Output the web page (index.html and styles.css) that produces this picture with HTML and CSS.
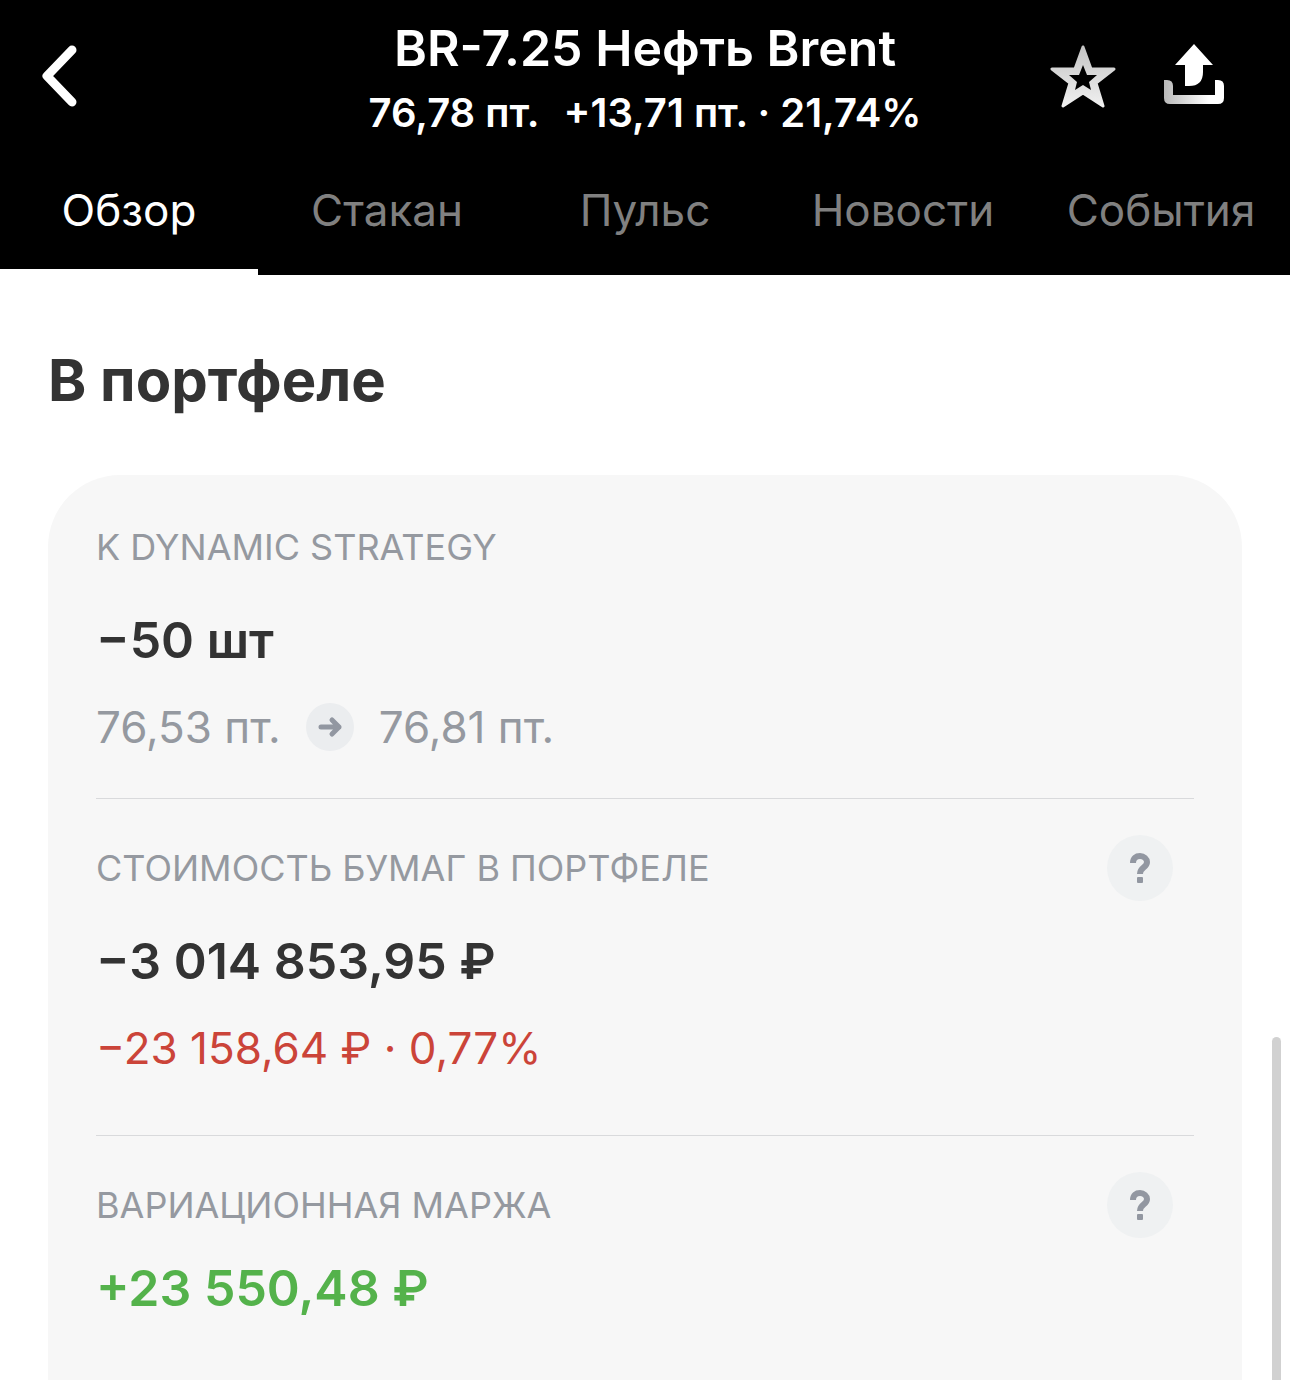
FILE: index.html
```html
<!DOCTYPE html>
<html lang="ru">
<head>
  <meta charset="UTF-8" />
  <meta name="viewport" content="width=device-width, initial-scale=1.0"/>
  <title>BR-7.25 Нефть Brent</title>
  <link rel="stylesheet" href="styles.css">
</head>
<body>

  <header class="header">
    <div class="topbar">
      <button class="icon-btn back" aria-label="Назад">
        <svg width="36" height="62" viewBox="0 0 36 62"><path d="M30 5L5 31l25 26" fill="none" stroke="#fff" stroke-width="9" stroke-linecap="round" stroke-linejoin="round"/></svg>
      </button>
      <div class="instrument">
        <h1>BR-7.25 Нефть Brent</h1>
        <p><span>76,78 пт.</span><span>+13,71 пт. · 21,74%</span></p>
      </div>
      <div class="actions">
        <button class="icon-btn" aria-label="В избранное">
          <svg width="66" height="64" viewBox="0 0 66 64">
            <defs>
              <linearGradient id="starFill" x1="0" y1="0" x2="0" y2="1">
                <stop offset="0" stop-color="#c4c4c4"/>
                <stop offset="1" stop-color="#f0f0f0"/>
              </linearGradient>
            </defs>
            <path d="M33 3L41 25H64L46 39L53 62L33 49L13 62L20 39L2 25H25Z" fill="url(#starFill)" stroke="url(#starFill)" stroke-width="3" stroke-linejoin="round"/>
            <path d="M33 21L37 31H47L39 38L41 46L33 41L25 46L27 38L19 31H29Z" fill="#000"/>
          </svg>
        </button>
        <button class="icon-btn" aria-label="Поделиться">
          <svg width="60" height="60" viewBox="0 0 60 60">
            <defs>
              <linearGradient id="trayFill" x1="0" y1="0" x2="1" y2="0">
                <stop offset="0" stop-color="#b8b8b8"/>
                <stop offset="0.75" stop-color="#fff"/>
              </linearGradient>
            </defs>
            <path d="M30 0L49 21H39V28Q39 42 25 42H21V21H11Z" fill="#fff"/>
            <path d="M0 36H3Q9 36 9 42V51H51V36H54Q60 36 60 42V54Q60 60 54 60H6Q0 60 0 54Z" fill="url(#trayFill)"/>
          </svg>
        </button>
      </div>
    </div>

    <nav class="tabs">
      <a href="#overview" class="tab active">Обзор</a>
      <a href="#orderbook" class="tab">Стакан</a>
      <a href="#pulse" class="tab">Пульс</a>
      <a href="#news" class="tab">Новости</a>
      <a href="#events" class="tab">События</a>
    </nav>
  </header>

  <main class="main" id="overview">
    <h2>В портфеле</h2>

    <div class="card">
      <section class="block">
        <div class="block-head">
          <h3>K DYNAMIC STRATEGY</h3>
        </div>
        <p class="value">−50 шт</p>
        <p class="detail prices">
          <span>76,53 пт.</span>
          <svg width="48" height="48" viewBox="0 0 48 48"><circle cx="24" cy="24" r="24" fill="#ebedef"/><path d="M15 24H33M26 17l7 7-7 7" fill="none" stroke="#9297a1" stroke-width="5" stroke-linecap="round" stroke-linejoin="round"/></svg>
          <span>76,81 пт.</span>
        </p>
      </section>

      <section class="block tall">
        <div class="block-head">
          <h3>СТОИМОСТЬ БУМАГ В ПОРТФЕЛЕ</h3>
          <button class="help" aria-label="Подсказка">
            <svg width="22" height="32" viewBox="0 0 22 32"><path d="M4 11C4 6 7 4 11 4s7 3 7 6c0 6-7 5-7 12" fill="none" stroke="#9297a1" stroke-width="6"/><rect x="8" y="25" width="6" height="6" rx="1" fill="#9297a1"/></svg>
          </button>
        </div>
        <p class="value">−3 014 853,95 ₽</p>
        <p class="detail down">−23 158,64 ₽ · 0,77%</p>
      </section>

      <section class="block tight">
        <div class="block-head">
          <h3>ВАРИАЦИОННАЯ МАРЖА</h3>
          <button class="help" aria-label="Подсказка">
            <svg width="22" height="32" viewBox="0 0 22 32"><path d="M4 11C4 6 7 4 11 4s7 3 7 6c0 6-7 5-7 12" fill="none" stroke="#9297a1" stroke-width="6"/><rect x="8" y="25" width="6" height="6" rx="1" fill="#9297a1"/></svg>
          </button>
        </div>
        <p class="value up">+23 550,48 ₽</p>
      </section>
    </div>
  </main>

  <div class="scroll-thumb"></div>

</body>
</html>
```

FILE: styles.css
```css
* { box-sizing: border-box; margin: 0; padding: 0; }

body {
  font-family: Inter, "Liberation Sans", sans-serif;
  background: #fff;
  color: #333;
  min-height: 100vh;
  display: flex;
  flex-direction: column;
  position: relative;
}

.header {
  background: #000;
  color: #fff;
}

.topbar {
  display: grid;
  grid-template-columns: 1fr auto 1fr;
  padding: 18px 66px 0 42px;
  height: 150px;
}

.icon-btn {
  display: block;
  background: none;
  border: none;
  cursor: pointer;
}

.icon-btn svg {
  display: block;
}

.back {
  justify-self: start;
  align-self: start;
  margin-top: 27px;
}

.instrument {
  text-align: center;
  margin-left: 24px;
}

.instrument h1 {
  font-size: 50px;
  font-weight: 600;
  line-height: 60px;
}

.instrument p {
  display: flex;
  justify-content: center;
  gap: 24px;
  font-size: 40px;
  font-weight: 600;
  line-height: 50px;
  margin-top: 10px;
  white-space: nowrap;
}

.actions {
  display: flex;
  justify-content: flex-end;
  align-items: flex-start;
  gap: 48px;
  padding-top: 26px;
}

.tabs {
  display: flex;
}

.tab {
  flex: 1 1 0;
  height: 125px;
  padding-top: 30px;
  border-bottom: 6px solid transparent;
  text-align: center;
  text-decoration: none;
  font-size: 44px;
  line-height: 60px;
  color: #808080;
}

.tab.active {
  color: #fff;
  border-bottom-color: #fff;
}

.main {
  flex: 1;
  display: flex;
  flex-direction: column;
  padding: 70px 48px 0;
}

.main h2 {
  font-size: 58px;
  font-weight: 700;
  line-height: 70px;
  margin-bottom: 60px;
}

.card {
  flex: 1;
  background: #f7f7f7;
  border-radius: 72px 72px 0 0;
  padding: 3px 48px 0;
}

.block {
  padding: 36px 0 46px;
  border-bottom: 1px solid #d9dadc;
}

.block.tall {
  padding-bottom: 62px;
}

.block:last-child {
  border-bottom: none;
}

.block-head {
  display: flex;
  justify-content: space-between;
  align-items: center;
  height: 66px;
  padding-right: 21px;
}

.block-head h3 {
  font-size: 36px;
  font-weight: 400;
  color: #9599a0;
}

.help {
  display: flex;
  align-items: center;
  justify-content: center;
  width: 66px;
  height: 66px;
  border: none;
  border-radius: 50%;
  background: #eff1f2;
  cursor: pointer;
}

.value {
  font-size: 50px;
  font-weight: 600;
  line-height: 60px;
  margin-top: 30px;
}

.tight .value {
  margin-top: 20px;
}

.detail {
  font-size: 44px;
  line-height: 50px;
  margin-top: 32px;
}

.prices {
  display: flex;
  align-items: center;
  gap: 25px;
  color: #9599a0;
}

.up {
  color: #54b24b;
}

.down {
  color: #cb4439;
}

.scroll-thumb {
  position: absolute;
  right: 9px;
  bottom: 0;
  width: 9px;
  height: 343px;
  border-radius: 5px 5px 0 0;
  background: #d1d1d1;
}
```
